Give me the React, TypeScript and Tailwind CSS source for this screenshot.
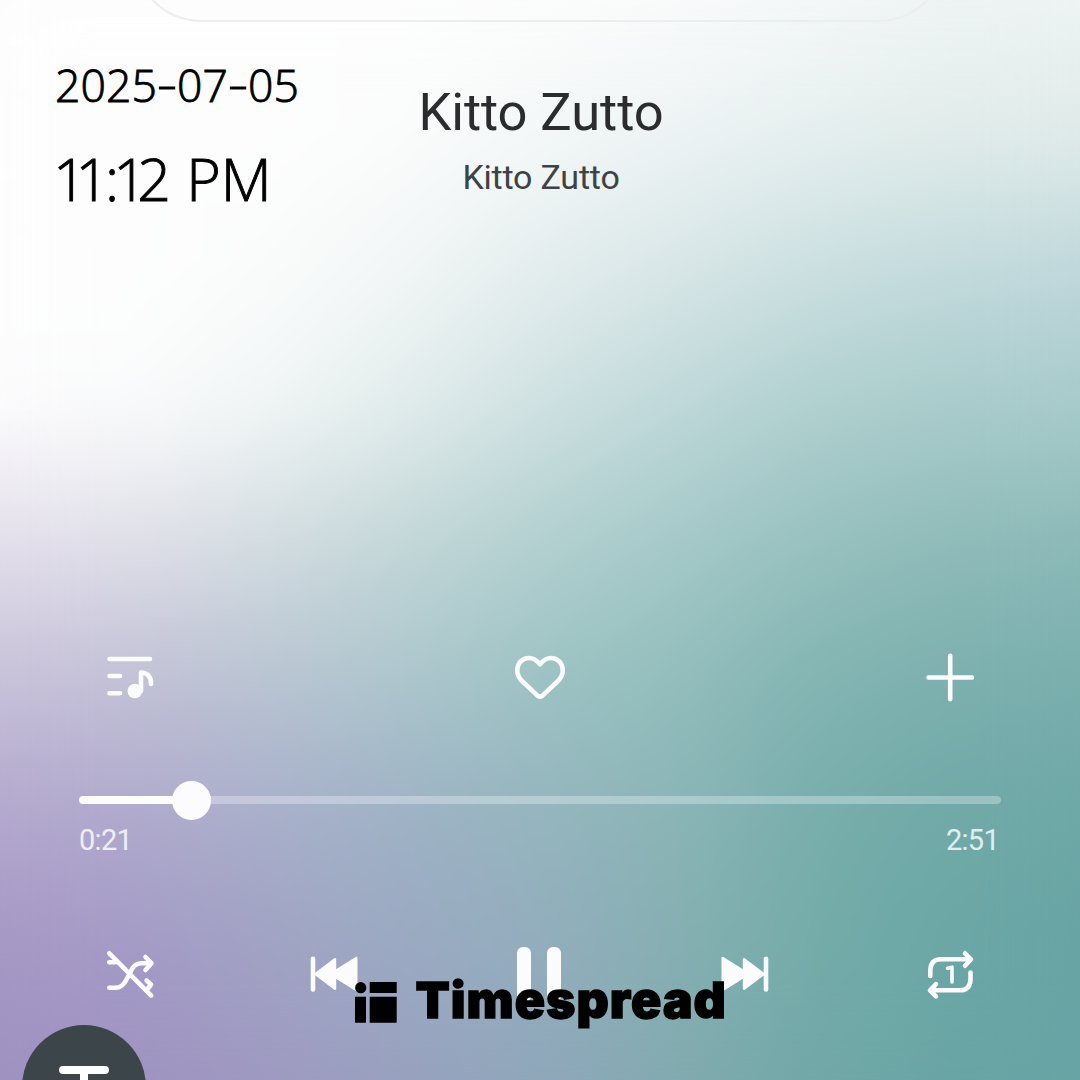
import type { ReactNode } from "react";

// Backdrop colours, one row every 135px from top to bottom
const backdrop = [
  ["#fdfdfd", "#fdfdfd", "#fdfdfd", "#fdfdfd", "#fcfcfc", "#fafbfb", "#f5f8f9", "#eff4f4", "#eef4f3"],
  ["#fdfdfd", "#fdfdfd", "#fdfdfd", "#fbfcfc", "#f4f8f8", "#edf3f4", "#e6efef", "#e1ecea", "#dfeae9"],
  ["#fdfdfd", "#fdfdfd", "#fafcfb", "#f2f6f6", "#e4edee", "#d8e6e7", "#cbdfe1", "#c3dadd", "#bfd7db"],
  ["#fcfcfd", "#fbfcfc", "#f1f6f6", "#e2ecec", "#cfe1e2", "#bfd8da", "#b0d0cf", "#a9cccb", "#a7caca"],
  ["#e4dfec", "#e0e0e9", "#d3dde1", "#c3d7d8", "#b3d0d0", "#a5c9c8", "#98c1bf", "#8fbbb9", "#8cbab8"],
  ["#c9c2da", "#c2c1d6", "#b9c5d2", "#adc7cd", "#9dc3c3", "#93bebd", "#83b5b3", "#7cb0ae", "#7aafae"],
  ["#b4a8ce", "#b0aacd", "#a9b0cb", "#9eb2c5", "#95b5bf", "#8bb5b6", "#78aeab", "#70a9a8", "#6ea8a7"],
  ["#a698c5", "#a49ac6", "#a0a3c3", "#9baac2", "#93adbd", "#86b0b2", "#74aca9", "#6ba7a6", "#68a4a4"],
  ["#9f91c1", "#9f93c1", "#9f99c1", "#98a1bf", "#90a7bb", "#82aab0", "#72a8a8", "#6aa5a5", "#69a4a6"],
];

const rowGradient = (row: string[]) => `linear-gradient(to right, ${row.join(", ")})`;

function GradientMesh({ className = "" }: { className?: string }) {
  return (
    <div className={`absolute inset-0 -z-10 flex flex-col ${className}`}>
      {backdrop.slice(1).map((row, i) => (
        <div key={i} className="h-[135px]" style={{ background: rowGradient(row) }}>
          <div
            className="h-full [mask-image:linear-gradient(to_bottom,black,transparent)]"
            style={{ background: rowGradient(backdrop[i]) }}
          />
        </div>
      ))}
    </div>
  );
}

function Icon({ children, className = "" }: { children: ReactNode; className?: string }) {
  return (
    <svg
      viewBox="0 0 60 60"
      className={`size-[60px] shrink-0 ${className}`}
      fill="none"
      stroke="#fcfcff"
      strokeWidth={4.6}
      strokeLinecap="round"
      strokeLinejoin="round"
    >
      {children}
    </svg>
  );
}

function QueueIcon() {
  return (
    <Icon>
      <path d="M9.5 11H50M9.5 28H20M9.5 45.3H20M41 43V24.5C47 24.5 51.5 29 51 36" />
      <circle cx="34.8" cy="43" r="7.3" fill="#fcfcff" stroke="none" />
    </Icon>
  );
}

function HeartIcon() {
  return (
    <Icon>
      <path d="M30 16.3C26.5 12 23 10 19 10C12 10 7.3 15.5 7.3 22.5C7.3 27 9 30 12 33L27 47.2Q30 49.8 33 47.2L48 33C51 30 52.7 27 52.7 22.5C52.7 15.5 48 10 41 10C37 10 33.5 12 30 16.3Z" />
    </Icon>
  );
}

function PlusIcon() {
  return (
    <Icon>
      <path d="M30.2 7.8V51.2M8.5 29.5H52" />
    </Icon>
  );
}

function ShuffleOffIcon() {
  return (
    <Icon>
      <path d="M9.3 9.3L51.2 51.6M9.3 18.3H15M9.3 43.7H15.5C21 43.7 24 41 27 34.5L30.5 28C33 22 36 19.3 41 19.3H50M45.5 13L51.5 19.3L45.5 26M46.5 36.5L51 40.5L48 44.5" />
    </Icon>
  );
}

function RepeatOneIcon() {
  return (
    <Icon>
      <path d="M10.3 32V27C10.3 19 14 15.3 21 15.3H50.5M45 9.3L51 15.3L45 21.7M50.5 28.5V34.5C50.5 42.5 47 46.3 40 46.3H10.5M16 40.2L10 46.3L16 52.3" />
      <path d="M27.5 24.3L32 23.2V38" strokeWidth={3.6} />
    </Icon>
  );
}

function PreviousIcon() {
  return (
    <Icon className="-ml-[10px]">
      <path d="M13 14.8V45.5" />
      <path
        d="M15.5 30L35 15.2V27.2L56.3 14V46L35 32.8V44.8Z"
        fill="#fcfcff"
        strokeWidth={2.4}
      />
    </Icon>
  );
}

function NextIcon() {
  return (
    <Icon className="-mr-[8px]">
      <path d="M47 14.8V45.5" />
      <path
        d="M44.5 30L25 15.2V27.2L3.7 14V46L25 32.8V44.8Z"
        fill="#fcfcff"
        strokeWidth={2.4}
      />
    </Icon>
  );
}

function PauseIcon() {
  return (
    <div className="flex w-[60px] justify-center gap-4">
      <div className="h-[55px] w-3.5 rounded-[6px] bg-[#fcfcfe]" />
      <div className="h-[55px] w-3.5 rounded-[6px] bg-[#fcfcfe]" />
    </div>
  );
}

function Timespread() {
  return (
    <div className="absolute top-[977px] left-[355px] flex h-[50px] text-black">
      <svg viewBox="0 0 42 50" className="h-[50px] w-[42px] shrink-0" fill="currentColor">
        <circle cx="5.7" cy="10.7" r="5.6" />
        <path d="M14.7 5H41.7V16H14.7ZM0 19.7H11V45.7H0ZM14.7 19.7H41.7V45.7H14.7Z" />
      </svg>
      <span className="ml-[18.5px] font-['Inter'] text-[50px] leading-[46px] font-black tracking-[1px] [-webkit-text-stroke:1.4px_black]">
        Timespread
      </span>
    </div>
  );
}

function Dash() {
  return <span className="inline-block w-[20px] -translate-y-[2px] scale-x-[1.4] text-center">-</span>;
}

export default function App() {
  return (
    <div className="relative isolate flex h-[1080px] w-[1080px] flex-col overflow-hidden font-['Roboto',sans-serif]">
      <GradientMesh />
      <GradientMesh className="blur-[40px]" />

      <div className="flex h-[22px] shrink-0 items-end justify-center overflow-hidden">
        <div className="h-[150px] w-[816px] shrink-0 rounded-[70px] border-2 border-[#ebeeed]" />
      </div>

      <header className="grid h-[626px] shrink-0 grid-cols-[381px_320px_1fr]">
        <div className="pt-[31px] pl-[55px] font-['Open_Sans',sans-serif] font-light whitespace-nowrap text-black [-webkit-text-stroke:0.9px_black]">
          <div className="text-[44.5px] leading-[64px] tracking-[0.1px]">
            2025
            <Dash />
            07
            <Dash />
            05
          </div>
          <div className="mt-[25px] -ml-[2px] text-[59px] leading-[72px]">
            <span className="tracking-[-11.3px]">1</span>
            <span className="tracking-[-4px]">1</span>
            <span className="tracking-[-6px]">:</span>
            <span className="tracking-[-9.5px]">1</span>
            <span>2 PM</span>
          </div>
        </div>
        <div className="pt-[58px] text-center">
          <h1 className="text-[52.5px] leading-[64px] tracking-[-0.1px] text-[#2a2c2d]">Kitto Zutto</h1>
          <p className="mt-[11px] text-[34px] leading-[44px] tracking-[-0.2px] text-[#3d4244]">Kitto Zutto</p>
        </div>
      </header>

      <div className="flex h-[60px] shrink-0 justify-between px-[100px]">
        <QueueIcon />
        <HeartIcon />
        <PlusIcon />
      </div>

      <div className="mt-[72px] px-[79px]">
        <div className="flex h-10 items-center">
          <div className="h-2 w-[95px] rounded-l-full bg-[#fcfcff]" />
          <div className="-ml-0.5 size-[39px] rounded-full bg-[#fcfcff]" />
          <div className="-ml-0.5 h-2 flex-1 rounded-r-full bg-white/30" />
        </div>
        <div className="mt-0.5 flex justify-between pr-0.5 text-[29px] leading-[36px] tracking-[-0.7px] text-white/80">
          <span>0:21</span>
          <span>2:51</span>
        </div>
      </div>

      <div className="mt-[86px] flex h-[60px] shrink-0 items-center justify-between px-[100px]">
        <ShuffleOffIcon />
        <PreviousIcon />
        <PauseIcon />
        <NextIcon />
        <RepeatOneIcon />
      </div>

      <Timespread />

      <div className="absolute top-[1025px] left-[22px] flex size-[124px] justify-center rounded-full bg-[#3c464a] pt-[41px]">
        <svg viewBox="0 0 52 48" className="h-12 w-[52px]" fill="none" stroke="white" strokeWidth={8} strokeLinecap="round">
          <path d="M5 4H47M26 4V44" />
        </svg>
      </div>
    </div>
  );
}
